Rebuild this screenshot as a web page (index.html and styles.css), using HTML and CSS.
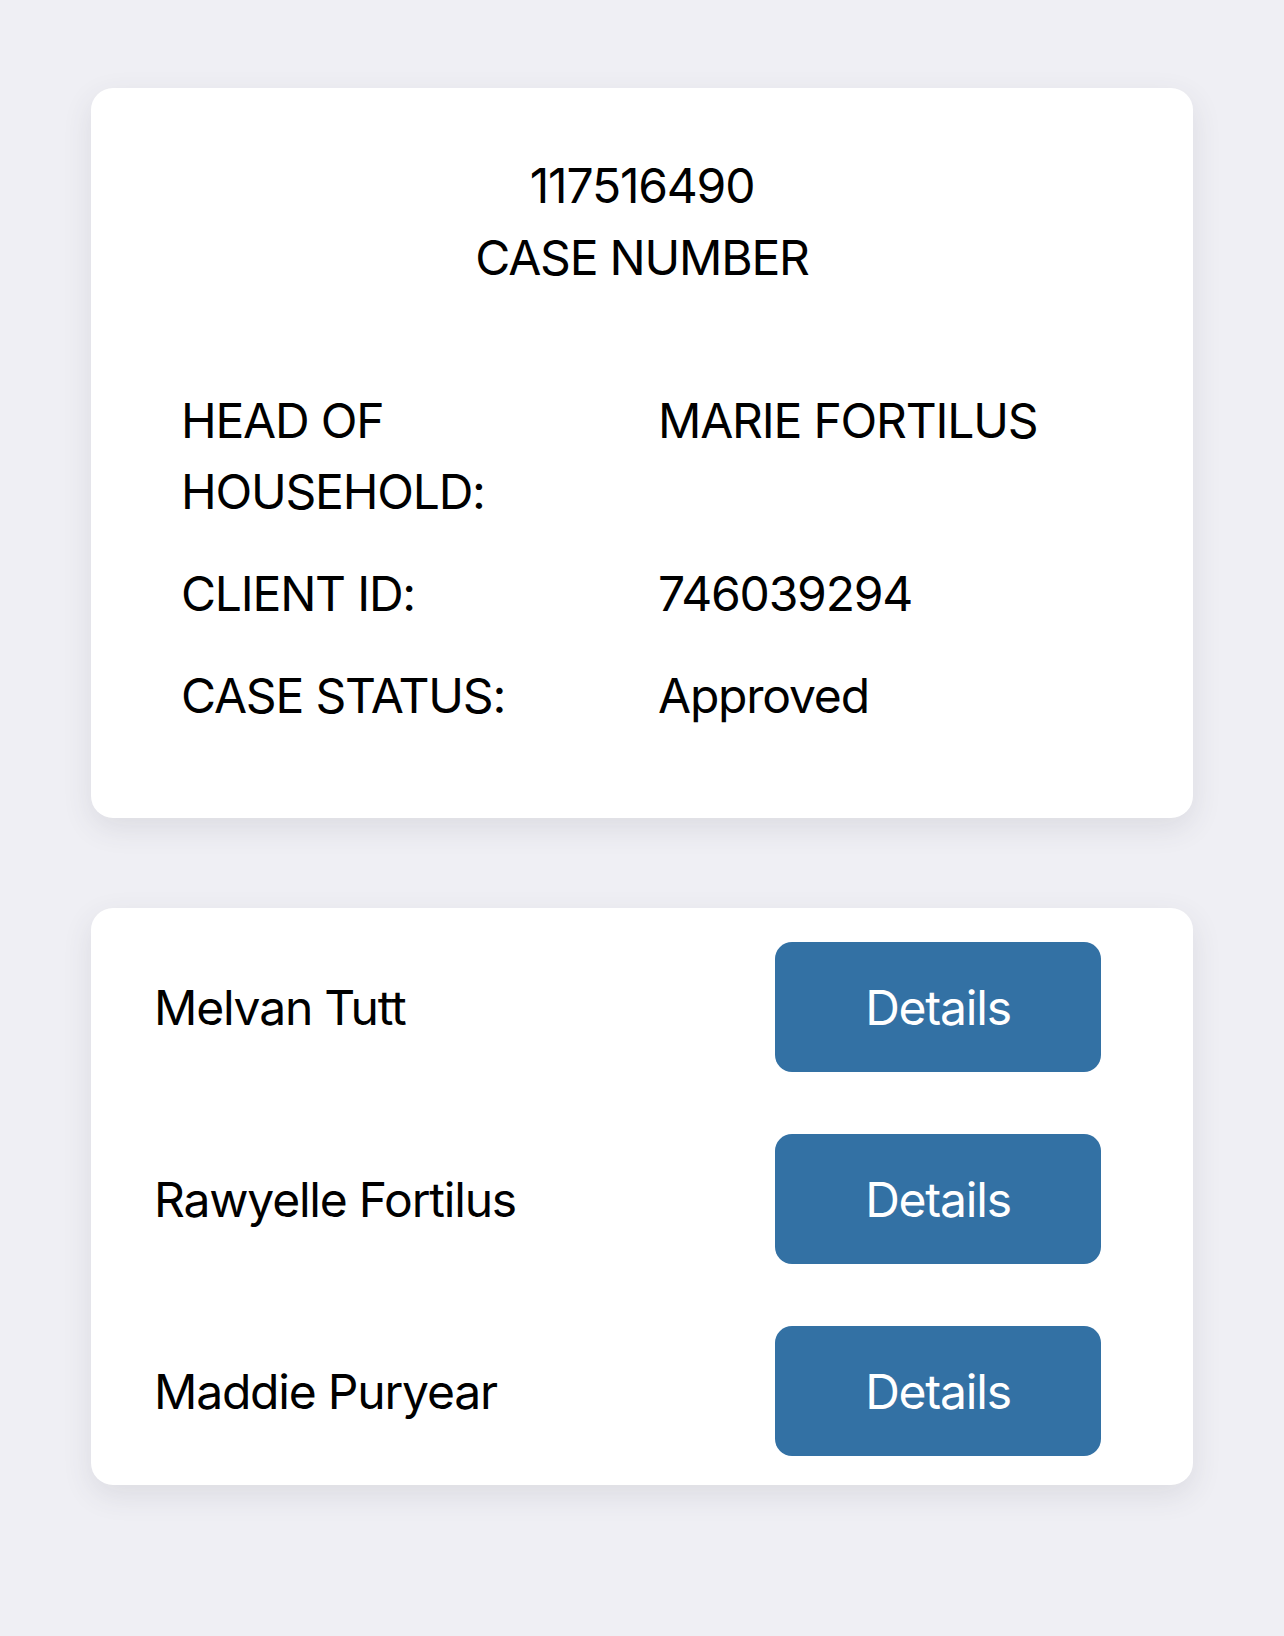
FILE: index.html
```html
<!DOCTYPE html>
<html lang="en">
<head>
<meta charset="utf-8">
<title>Case</title>
<link rel="stylesheet" href="styles.css">
</head>
<body>
<main class="page">
  <section class="card case-card">
    <div class="case-head">
      <div class="case-number">117516490</div>
      <div class="case-caption">CASE NUMBER</div>
    </div>
    <dl class="info">
      <dt>HEAD OF HOUSEHOLD:</dt>
      <dd>MARIE FORTILUS</dd>
      <dt>CLIENT ID:</dt>
      <dd>746039294</dd>
      <dt>CASE STATUS:</dt>
      <dd>Approved</dd>
    </dl>
  </section>

  <section class="card members">
    <div class="member">
      <span class="member-name">Melvan Tutt</span>
      <button class="details-btn" type="button">Details</button>
    </div>
    <div class="member">
      <span class="member-name">Rawyelle Fortilus</span>
      <button class="details-btn" type="button">Details</button>
    </div>
    <div class="member">
      <span class="member-name">Maddie Puryear</span>
      <button class="details-btn" type="button">Details</button>
    </div>
  </section>
</main>
</body>
</html>
```

FILE: styles.css
```css
html, body {
  margin: 0;
  padding: 0;
}

body {
  background: #efeff4;
  font-family: Inter, "Noto Sans", "Liberation Sans", sans-serif;
  color: #000;
  font-size: 48px;
  letter-spacing: -1.2px;
}

.page {
  padding: 88px 91px 100px;
  display: flex;
  flex-direction: column;
  gap: 90px;
}

.card {
  background: #fff;
  border-radius: 22px;
  box-shadow: 0 10px 30px rgba(60, 60, 80, 0.11);
}

.case-card {
  padding: 62px 90px 87px 90px;
}

.case-head {
  text-align: center;
  line-height: 72px;
}

.info {
  margin: 91px 0 0;
  display: grid;
  grid-template-columns: 477px 1fr;
  row-gap: 31px;
  line-height: 71px;
}

.info dt,
.info dd {
  margin: 0;
}

.info dt {
  padding-right: 40px;
}

.members {
  padding: 34px 92px 29px 63px;
  display: flex;
  flex-direction: column;
  gap: 62px;
}

.member {
  display: flex;
  align-items: center;
  justify-content: space-between;
}

.details-btn {
  width: 326px;
  height: 130px;
  border: none;
  border-radius: 17px;
  background: #3371a4;
  color: #fff;
  font-family: inherit;
  font-size: 48px;
  letter-spacing: -1.2px;
  padding: 0;
}
```
